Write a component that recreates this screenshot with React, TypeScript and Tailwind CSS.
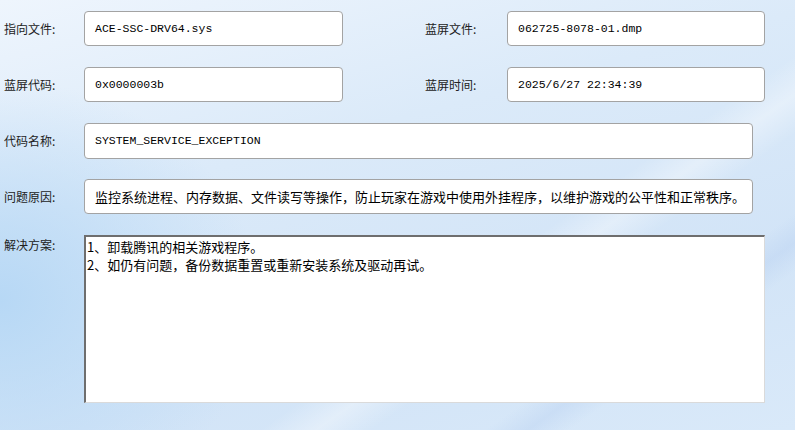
import React from 'react';

const labelFont = { fontFamily: '"Noto Sans CJK SC", "Noto Sans", sans-serif' };

function Label({ text, className = '' }: { text: string; className?: string }) {
  return (
    <span className={`text-[12px] text-[#222] leading-none shrink-0 font-['Noto_Sans_CJK_SC',sans-serif] ${className}`}>
      {text}
    </span>
  );
}

function Field({ value, className = '', cjk = false }: { value: string; className?: string; cjk?: boolean }) {
  return (
    <div
      className={`flex items-center h-full bg-white border border-[#a3a3a3] rounded-[4px] pl-[10px] text-black whitespace-nowrap overflow-hidden ${
        cjk
          ? "text-[13px] font-['Noto_Sans_CJK_SC',sans-serif]"
          : "text-[11.5px] font-['Liberation_Mono',monospace]"
      } ${className}`}
    >
      {value}
    </div>
  );
}

export default function App() {
  return (
    <div className="relative w-[795px] h-[430px] overflow-hidden bg-[radial-gradient(ellipse_260px_220px_at_0px_300px,#b7d8f5_0%,rgba(183,216,245,0)_100%),linear-gradient(165deg,#eef5fd_0%,#dbeaf9_35%,#d2e4f7_70%,#d9e9f9_100%)]">
      {/* light streaks, right side */}
      <div className="absolute inset-0 pointer-events-none bg-[linear-gradient(145deg,rgba(255,255,255,0)_62%,rgba(255,255,255,0.35)_66%,rgba(255,255,255,0)_70%,rgba(255,255,255,0)_78%,rgba(180,205,240,0.35)_81%,rgba(255,255,255,0)_84%)]" />

      <div className="relative flex flex-col gap-[21px] pt-[11px] pl-[4px]" style={labelFont}>
        {/* row 1 */}
        <div className="flex items-center h-[35px]">
          <Label text="指向文件:" className="w-[80px]" />
          <Field value="ACE-SSC-DRV64.sys" className="w-[259px]" />
          <Label text="蓝屏文件:" className="w-[82px] ml-[82px]" />
          <Field value="062725-8078-01.dmp" className="w-[258px]" />
        </div>

        {/* row 2 */}
        <div className="flex items-center h-[35px]">
          <Label text="蓝屏代码:" className="w-[80px]" />
          <Field value="0x0000003b" className="w-[259px]" />
          <Label text="蓝屏时间:" className="w-[82px] ml-[82px]" />
          <Field value="2025/6/27 22:34:39" className="w-[258px]" />
        </div>

        {/* row 3 */}
        <div className="flex items-center h-[36px]">
          <Label text="代码名称:" className="w-[80px]" />
          <Field value="SYSTEM_SERVICE_EXCEPTION" className="w-[669px]" />
        </div>

        {/* row 4 */}
        <div className="flex items-center h-[35px] -mt-[1px]">
          <Label text="问题原因:" className="w-[80px]" />
          <Field
            cjk
            value="监控系统进程、内存数据、文件读写等操作，防止玩家在游戏中使用外挂程序，以维护游戏的公平性和正常秩序。"
            className="w-[669px]"
          />
        </div>

        {/* solution */}
        <div className="flex items-start">
          <Label text="解决方案:" className="w-[80px] pt-[4px]" />
          <div className="w-[681px] h-[168px] bg-white border-t-2 border-l-2 border-t-[#6e6e6e] border-l-[#6e6e6e] border-r border-b border-r-[#dadada] border-b-[#dadada] pl-[1px] pt-[1px] text-[13px] leading-[18px] text-black font-['Noto_Sans_CJK_SC',sans-serif]">
            <div>1、卸载腾讯的相关游戏程序。</div>
            <div>2、如仍有问题，备份数据重置或重新安装系统及驱动再试。</div>
          </div>
        </div>
      </div>
    </div>
  );
}
